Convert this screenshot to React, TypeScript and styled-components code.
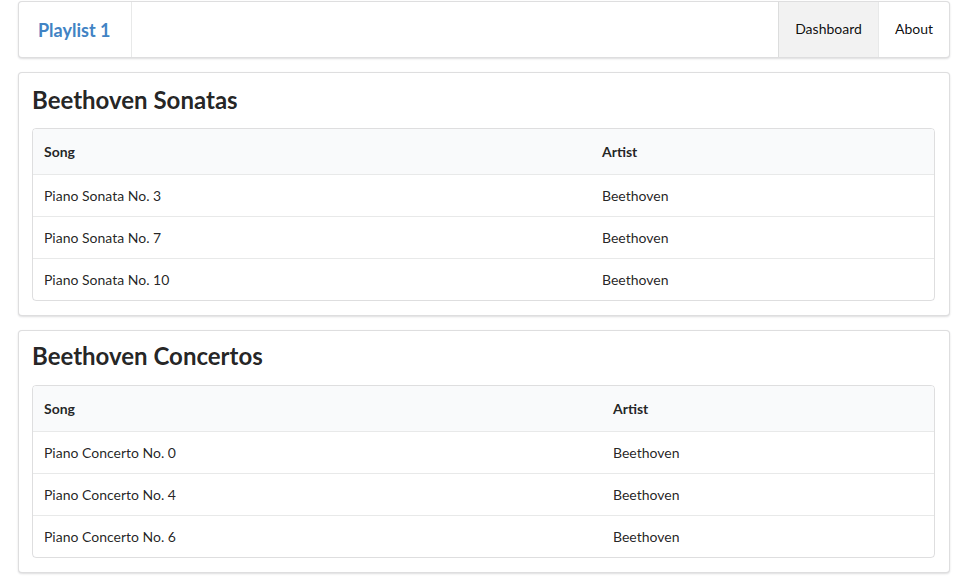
import React from "react";
import styled, { createGlobalStyle } from "styled-components";

const GlobalStyle = createGlobalStyle`
  html, body { margin: 0; padding: 0; background: #fff; }
  body {
    font-family: Lato, "Helvetica Neue", Arial, sans-serif;
    font-size: 14px;
    line-height: 1.4285em;
    color: rgba(0, 0, 0, 0.87);
  }
  * { box-sizing: border-box; }
`;

const Page = styled.div`
  width: 950px;
  padding: 1px 0 14px 18px;
  display: flex;
  flex-direction: column;
  gap: 14px;
`;

const Menu = styled.nav`
  display: flex;
  align-items: stretch;
  height: 57px;
  border: 1px solid rgba(34, 36, 38, 0.15);
  border-radius: 4px;
  box-shadow: 0 1px 2px 0 rgba(34, 36, 38, 0.15);
  background: #fff;
  overflow: hidden;
`;

const Brand = styled.a`
  display: flex;
  align-items: center;
  padding: 0 0 0 19px;
  width: 113px;
  white-space: nowrap;
  border-right: 1px solid rgba(34, 36, 38, 0.1);
  color: #4183c4;
  font-weight: 700;
  font-size: 18px;
  line-height: 1;
  text-decoration: none;
`;

const Spacer = styled.div`
  flex: 1;
`;

const MenuItem = styled.a<{ $active?: boolean; $w: number }>`
  display: flex;
  align-items: center;
  justify-content: center;
  padding-bottom: 2px;
  width: ${(p) => p.$w}px;
  background: ${(p) => (p.$active ? "#f2f2f2" : "transparent")};
  border-left: 1px solid rgba(34, 36, 38, 0.1);
  color: rgba(0, 0, 0, 0.95);
  font-size: 14px;
  text-decoration: none;
`;

const Segment = styled.section`
  border: 1px solid rgba(34, 36, 38, 0.15);
  border-radius: 4px;
  box-shadow: 0 1px 2px 0 rgba(34, 36, 38, 0.15);
  background: #fff;
  padding: 14px 14px 14px 13px;
`;

const Header = styled.h2<{ $top: number; $bottom: number }>`
  margin: ${(p) => p.$top}px 0 ${(p) => p.$bottom}px 0;
  font-size: 24px;
  font-weight: 700;
  line-height: 31px;
  color: rgba(0, 0, 0, 0.87);
`;

const Table = styled.table`
  width: 100%;
  border-collapse: separate;
  border-spacing: 0;
  border: 1px solid rgba(34, 36, 38, 0.15);
  border-radius: 4px;
  text-align: left;
  overflow: hidden;
`;

const Th = styled.th<{ $w?: number }>`
  height: 45px;
  padding: 0 11px;
  width: ${(p) => (p.$w ? `${p.$w}px` : "auto")};
  background: #f9fafb;
  font-weight: 700;
  color: rgba(0, 0, 0, 0.87);
  vertical-align: middle;
`;

const Td = styled.td`
  height: 42px;
  padding: 0 11px;
  border-top: 1px solid rgba(34, 36, 38, 0.1);
  vertical-align: middle;
`;

type Playlist = {
  title: string;
  headerTop: number;
  headerBottom: number;
  songCol: number;
  songs: string[];
};

const playlists: Playlist[] = [
  {
    title: "Beethoven Sonatas",
    headerTop: -3,
    headerBottom: 13,
    songCol: 558,
    songs: ["Piano Sonata No. 3", "Piano Sonata No. 7", "Piano Sonata No. 10"],
  },
  {
    title: "Beethoven Concertos",
    headerTop: -5,
    headerBottom: 14,
    songCol: 569,
    songs: ["Piano Concerto No. 0", "Piano Concerto No. 4", "Piano Concerto No. 6"],
  },
];

export default function App() {
  return (
    <>
      <GlobalStyle />
      <Page>
        <Menu>
          <Brand href="#">Playlist 1</Brand>
          <Spacer />
          <MenuItem href="#" $active $w={100}>
            Dashboard
          </MenuItem>
          <MenuItem href="#" $w={71}>
            About
          </MenuItem>
        </Menu>
        {playlists.map((pl) => (
          <Segment key={pl.title}>
            <Header $top={pl.headerTop} $bottom={pl.headerBottom}>
              {pl.title}
            </Header>
            <Table>
              <thead>
                <tr>
                  <Th $w={pl.songCol}>Song</Th>
                  <Th>Artist</Th>
                </tr>
              </thead>
              <tbody>
                {pl.songs.map((s) => (
                  <tr key={s}>
                    <Td>{s}</Td>
                    <Td>Beethoven</Td>
                  </tr>
                ))}
              </tbody>
            </Table>
          </Segment>
        ))}
      </Page>
    </>
  );
}
